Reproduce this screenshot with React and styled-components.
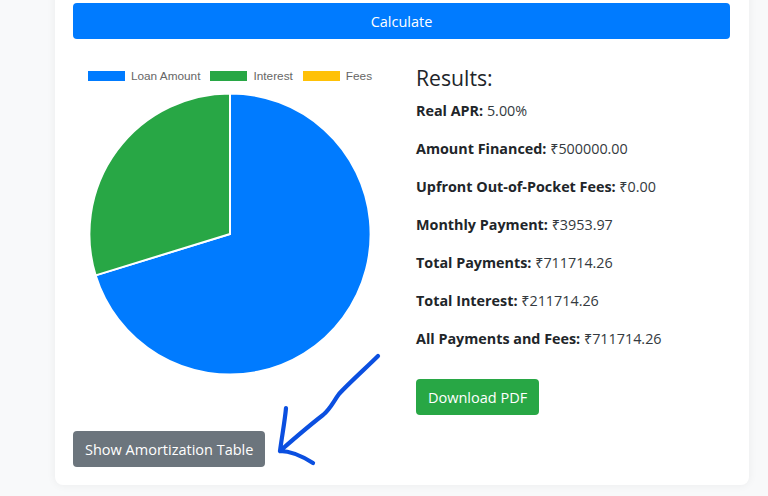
import React from "react";
import styled, { createGlobalStyle } from "styled-components";

const Global = createGlobalStyle`
  html, body { margin: 0; height: 496px; overflow: hidden; background: #f8f9fa; }
  * { box-sizing: border-box; }
  body { font-family: "Open Sans", "Noto Sans", "Liberation Sans", sans-serif; color: #212529; }
`;
const Page = styled.div`
  position: relative;
  width: 768px;
  height: 496px;
  overflow: hidden;
  padding-left: 55px;
`;
const Card = styled.div`
  width: 694px;
  margin-top: -15px;
  padding: 18px 19px 18px 18px;
  background: #fff;
  border-radius: 8px;
  box-shadow: 0 0 10px rgba(0, 0, 0, 0.06);
`;
const Button = styled.button`
  display: ${(p) => (p.$block ? "block" : "inline-block")};
  width: ${(p) => (p.$block ? "100%" : "auto")};
  height: 36px;
  padding: 0 12px;
  border: 0;
  border-radius: 4px;
  background: ${(p) => p.$bg};
  color: #fff;
  font-family: inherit;
  font-size: 14.5px;
  line-height: 38px;
`;
const Columns = styled.div`
  display: grid;
  grid-template-columns: 313.5px 313.5px;
  column-gap: 29.5px;
  margin-top: 27px;
`;
const LeftColumn = styled.div`
  display: flex;
  flex-direction: column;
  align-items: flex-start;
`;
const Legend = styled.div`
  display: flex;
  justify-content: center;
  gap: 10px;
  width: 100%;
  height: 27px;
  padding-left: 0.5px;
`;
const LegendItem = styled.div`
  display: flex;
  align-items: center;
  gap: 6px;
  height: 20px;
  font-family: "Liberation Sans", Arial, sans-serif;
  font-size: 11.8px;
  color: #666;
`;
const Swatch = styled.span`
  width: 37px;
  height: 10px;
  background: ${(p) => p.$color};
`;
const Pie = styled.svg`
  display: block;
  width: 314px;
  height: 282px;
`;
const AmortButton = styled(Button)`
  margin-top: 56px;
`;
const RightColumn = styled.div`
  display: flex;
  flex-direction: column;
  align-items: flex-start;
`;
const Heading = styled.h4`
  margin: 0 0 10px;
  font-size: 21.2px;
  font-weight: 400;
  line-height: 24px;
`;
const Line = styled.p`
  margin: 0 0 16px;
  font-size: 14.35px;
  line-height: 22px;
  color: #343a40;
  & strong { font-weight: 700; color: #212529; }
`;
const PdfButton = styled(Button)`
  margin-top: 13px;
`;
const Arrow = styled.svg`
  position: absolute;
  left: 0;
  top: 0;
  width: 768px;
  height: 496px;
  pointer-events: none;
`;

const rows = [
  ["Real APR:", "5.00%"],
  ["Amount Financed:", "₹500000.00"],
  ["Upfront Out-of-Pocket Fees:", "₹0.00"],
  ["Monthly Payment:", "₹3953.97"],
  ["Total Payments:", "₹711714.26"],
  ["Total Interest:", "₹211714.26"],
  ["All Payments and Fees:", "₹711714.26"],
];

const legend = [
  ["Loan Amount", "#007bff"],
  ["Interest", "#28a745"],
  ["Fees", "#ffc107"],
];

export default function App() {
  const cx = 157;
  const cy = 141;
  const r = 140.6;
  const angle = (252.9 * Math.PI) / 180;
  const ex = cx + r * Math.sin(angle);
  const ey = cy - r * Math.cos(angle);
  return (
    <Page>
      <Global />
      <Card>
        <Button $block $bg="#007bff">Calculate</Button>
        <Columns>
          <LeftColumn>
            <Legend>
              {legend.map(([label, color]) => (
                <LegendItem key={label}>
                  <Swatch $color={color} />
                  {label}
                </LegendItem>
              ))}
            </Legend>
            <Pie viewBox="0 0 314 282">
              <path
                d={`M${cx} ${cy} L${cx} ${cy - r} A${r} ${r} 0 1 1 ${ex} ${ey} Z`}
                fill="#007bff"
                stroke="#fff"
                strokeWidth="2"
              />
              <path
                d={`M${cx} ${cy} L${ex} ${ey} A${r} ${r} 0 0 1 ${cx} ${cy - r} Z`}
                fill="#28a745"
                stroke="#fff"
                strokeWidth="2"
              />
            </Pie>
            <AmortButton $bg="#6c757d">Show Amortization Table</AmortButton>
          </LeftColumn>
          <RightColumn>
            <Heading>Results:</Heading>
            {rows.map(([k, v]) => (
              <Line key={k}>
                <strong>{k}</strong> {v}
              </Line>
            ))}
            <PdfButton $bg="#28a745">Download PDF</PdfButton>
          </RightColumn>
        </Columns>
      </Card>
      <Arrow viewBox="0 0 768 496">
        <path
          d="M378 356 C368 366 348 384 339 394 C333 402 331 408 323 415 C310 425 296 437 280 451 M286 408 C285 420 282 436 280 451 C291 451 302 456 313 463"
          fill="none"
          stroke="#0b4fe0"
          strokeWidth="4.2"
          strokeLinecap="round"
          strokeLinejoin="round"
        />
      </Arrow>
    </Page>
  );
}
